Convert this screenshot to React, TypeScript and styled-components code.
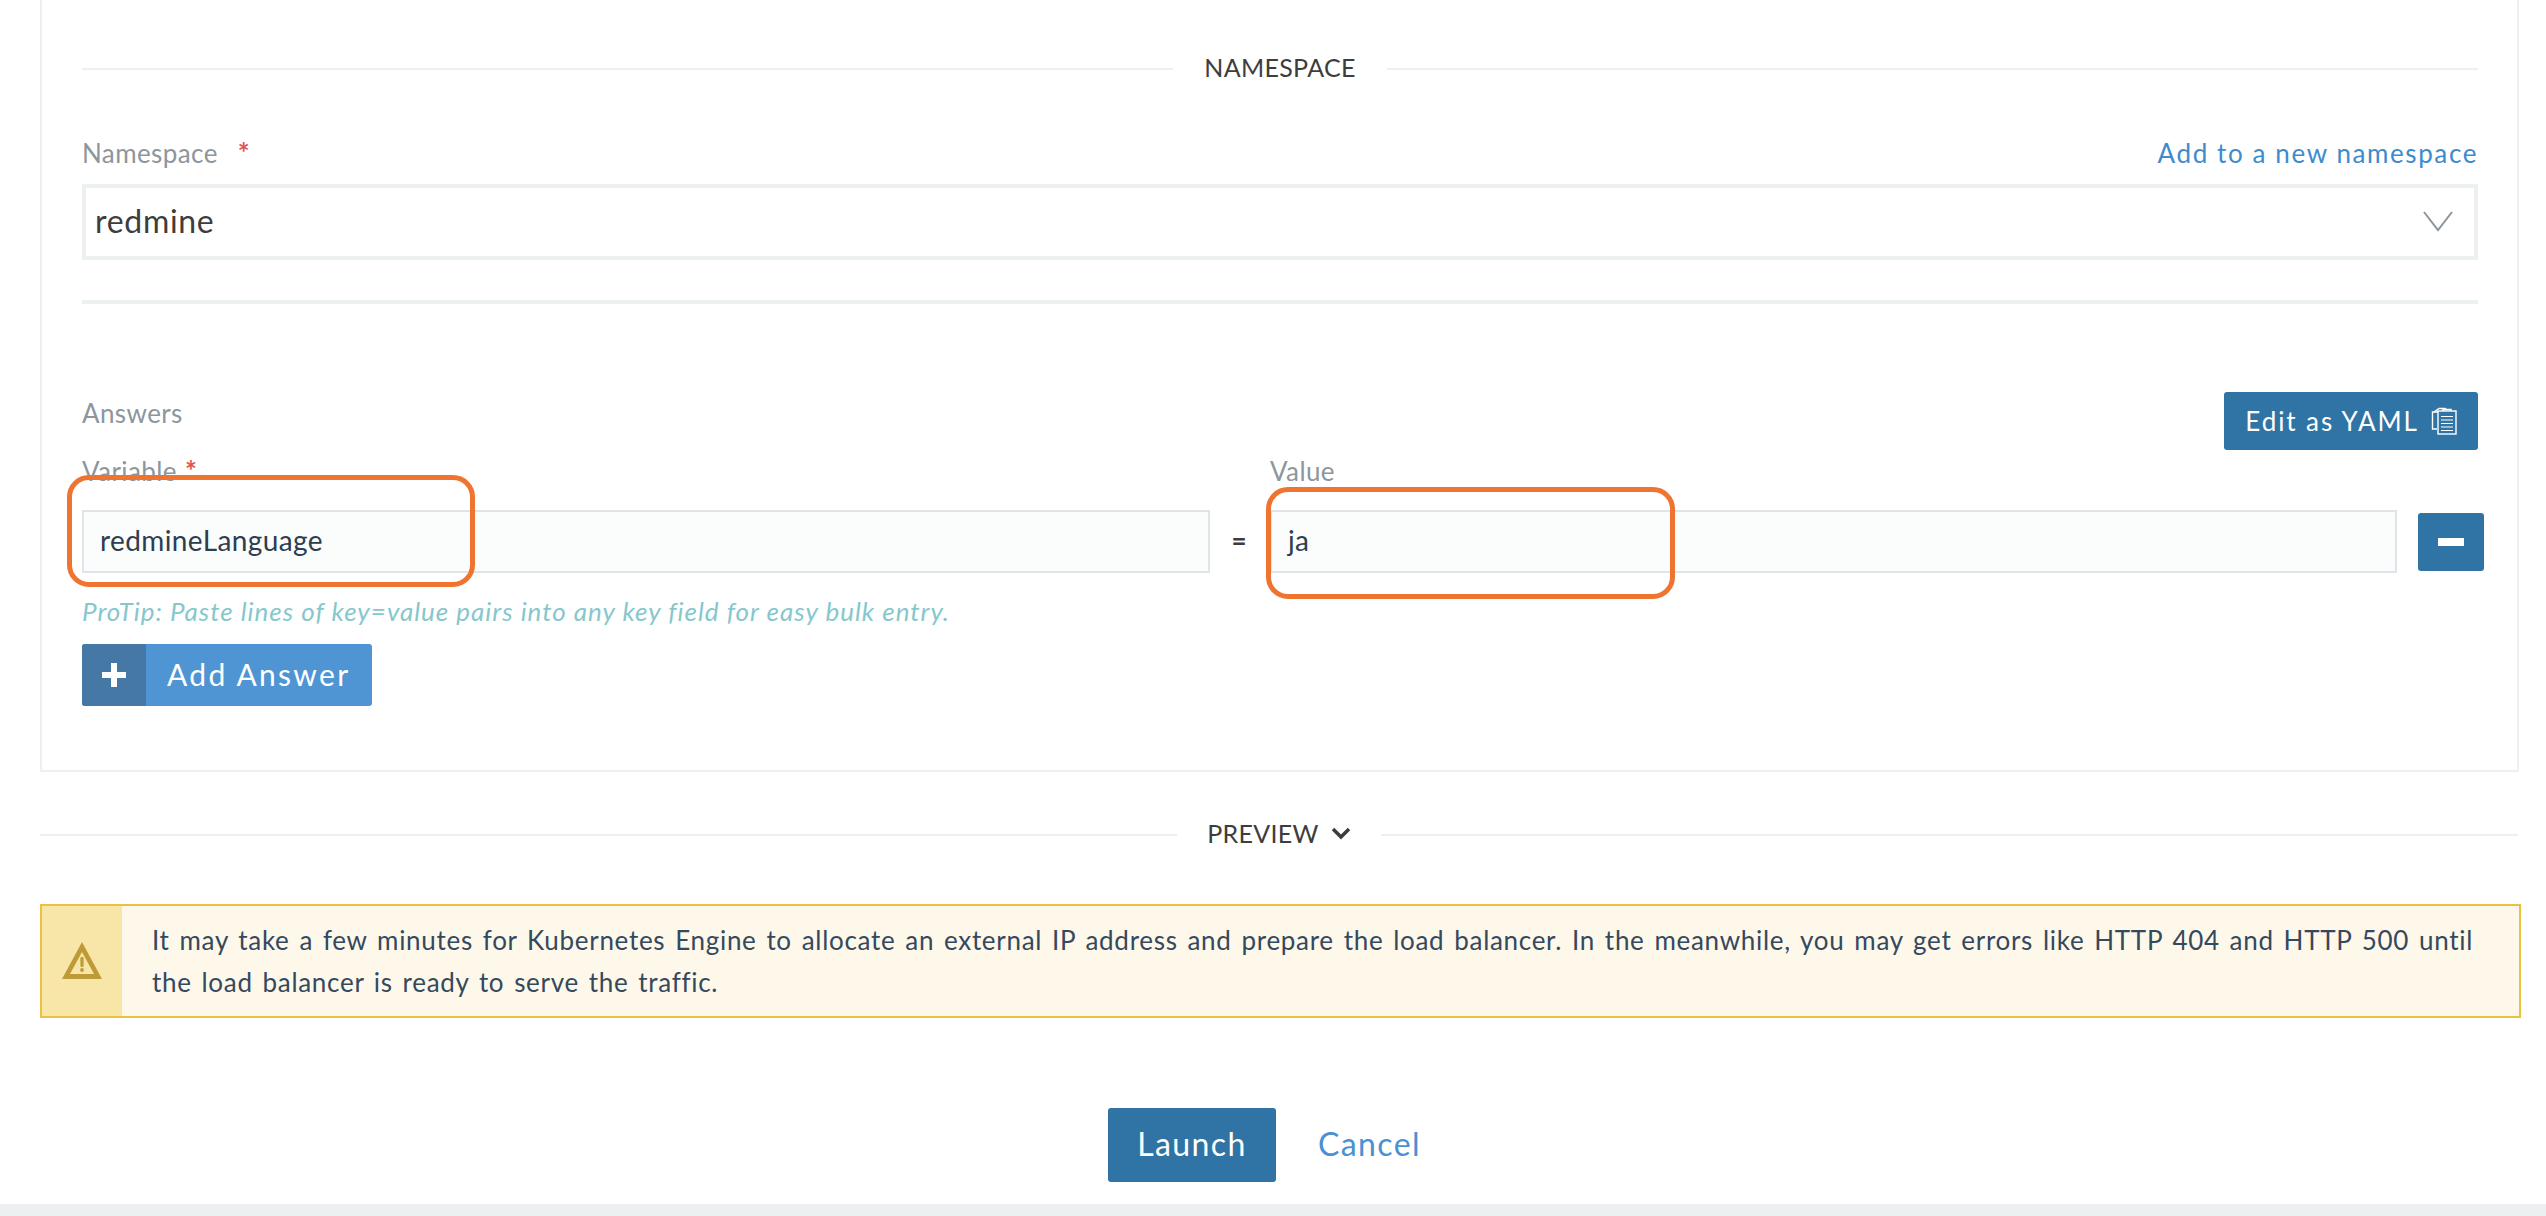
import React from 'react';
import styled, { createGlobalStyle } from 'styled-components';

const GlobalStyle = createGlobalStyle`
	html, body {
		margin: 0;
		padding: 0;
		background: #fff;
	}
	body {
		font-family: Lato, "Noto Sans", sans-serif;
		font-size: 26px;
		color: #3d3d3d;
	}
`;

const Page = styled.div`
	width: 2546px;
	height: 1216px;
	overflow: hidden;
	display: flex;
	flex-direction: column;
	box-sizing: border-box;
`;

const Main = styled.div`
	flex: 1;
	padding-left: 40px;
	width: 2481px;
`;

const Panel = styled.section`
	width: 2479px;
	box-sizing: border-box;
	padding: 53px 39px 64px 40px;
	border: 2px solid #edf0f1;
	border-top: none;
`;

const DividerRow = styled.div<{ $gap: number }>`
	display: flex;
	align-items: center;
	gap: ${(p) => p.$gap}px;
	height: 30px;
	line-height: 30px;
	letter-spacing: 0.3px;
	font-size: 25px;
	text-transform: uppercase;
	color: #3d3d3d;

	&::before,
	&::after {
		content: '';
		flex: 1;
		height: 2px;
		margin-top: 2px;
		background: #edf0f1;
	}
`;

const DividerLabel = styled.span`
	display: inline-flex;
	align-items: center;
	gap: 12px;
	margin-bottom: 2px;
`;

const FieldHead = styled.div`
	display: flex;
	justify-content: space-between;
	margin-top: 55px;
	height: 30px;
	line-height: 30px;
`;

const Label = styled.label`
	font-size: 26px;
	line-height: 30px;
	letter-spacing: 0.4px;
	color: #8d969d;
`;

const Required = styled.span<{ $gap: number }>`
	margin-left: ${(p) => p.$gap}px;
	font-size: 28px;
	font-weight: 700;
	line-height: 0;
	color: #e25555;
`;

const TextLink = styled.a`
	color: #3d8bcd;
	font-size: 26px;
	letter-spacing: 1.6px;
`;

const Select = styled.div`
	display: flex;
	align-items: center;
	justify-content: space-between;
	box-sizing: border-box;
	height: 76px;
	margin-top: 16px;
	padding: 0 20px 4px 9px;
	border: 4px solid #edf0f1;
	font-size: 32px;
	letter-spacing: 0.7px;
	color: #3d3d3d;
`;

const Rule = styled.hr`
	height: 4px;
	margin: 40px 0 0;
	border: none;
	background: #edf0f1;
`;

const AnswersHead = styled.div`
	display: flex;
	justify-content: space-between;
	align-items: flex-start;
	margin-top: 88px;
`;

const AnswersLabel = styled(Label)`
	padding-top: 6px;
`;

const Button = styled.button`
	display: inline-flex;
	align-items: center;
	justify-content: center;
	border: none;
	border-radius: 3px;
	background: #3073a5;
	color: #fff;
	font-family: inherit;
`;

const YamlButton = styled(Button)`
	gap: 12px;
	width: 254px;
	height: 58px;
	font-size: 26px;
	letter-spacing: 1.9px;
`;

const Answer = styled.div`
	display: flex;
	align-items: flex-end;
	margin-top: 6px;
	width: 2402px;
`;

const Field = styled.div<{ $width: number }>`
	position: relative;
	width: ${(p) => p.$width}px;
	flex: none;
`;

const FieldLabel = styled(Label)`
	display: block;
	margin-bottom: 24px;
`;

const Input = styled.div`
	box-sizing: border-box;
	height: 63px;
	padding-left: 16px;
	border: 2px solid #dfe4e8;
	background: #fbfcfc;
	font-size: 28px;
	letter-spacing: 0.4px;
	line-height: 56px;
	color: #2d3e50;
`;

const Equals = styled.div`
	flex: none;
	width: 58px;
	height: 63px;
	padding-right: 2px;
	line-height: 60px;
	text-align: center;
	font-size: 26px;
	font-weight: 700;
	color: #3d3d3d;
`;

const Callout = styled.div<{ $left: number; $top: number; $width: number }>`
	position: absolute;
	left: ${(p) => p.$left}px;
	top: ${(p) => p.$top}px;
	width: ${(p) => p.$width}px;
	height: 112px;
	box-sizing: border-box;
	border: 5px solid #ee7430;
	border-radius: 22px;
`;

const MinusButton = styled(Button)`
	flex: none;
	width: 66px;
	height: 58px;
	margin: 0 0 2px 21px;
`;

const ProTip = styled.div`
	margin-top: 23px;
	line-height: 30px;
	font-size: 26px;
	font-style: italic;
	letter-spacing: 1px;
	color: #86c7cc;
`;

const AddButton = styled.button`
	display: flex;
	align-items: stretch;
	width: 290px;
	height: 62px;
	margin-top: 18px;
	padding: 0;
	border: none;
	border-radius: 3px;
	overflow: hidden;
	background: #4f95d4;
	color: #fff;
	font-family: inherit;
	font-size: 30px;
	letter-spacing: 2.3px;
`;

const AddIcon = styled.span`
	display: flex;
	align-items: center;
	justify-content: center;
	width: 64px;
	background: #4578a4;
`;

const AddText = styled.span`
	flex: 1;
	line-height: 60px;
	text-align: left;
	padding-left: 21px;
`;

const PreviewRow = styled(DividerRow)`
	margin-top: 47px;
	width: 2478px;
`;

const Banner = styled.div`
	display: flex;
	box-sizing: border-box;
	width: 2481px;
	height: 114px;
	margin-top: 55px;
	border: 2px solid #eac143;
	background: #fef8ea;
`;

const BannerIcon = styled.div`
	display: flex;
	align-items: center;
	justify-content: center;
	flex: none;
	width: 80px;
	background: #f8e6a8;
`;

const BannerText = styled.p`
	flex: 1;
	margin: 0;
	padding: 13px 46px 0 30px;
	font-size: 26px;
	line-height: 42px;
	letter-spacing: 0.7px;
	word-spacing: 2.5px;
	text-align: justify;
	color: #34495e;
`;

const Actions = styled.div`
	display: flex;
	align-items: center;
	justify-content: center;
	gap: 42px;
	margin-top: 90px;
	padding-right: 32px;
`;

const LaunchButton = styled(Button)`
	width: 168px;
	height: 74px;
	padding: 0 0 3px;
	font-size: 32px;
	letter-spacing: 1.4px;
`;

const CancelLink = styled.a`
	margin-bottom: 3px;
	color: #4a90d2;
	font-size: 32px;
	letter-spacing: 1.4px;
`;

const Footer = styled.footer`
	flex: none;
	height: 12px;
	background: #edf0f1;
`;

const Chevron: React.FC<{ size: number; color: string; stroke: number }> = ({ size, color, stroke }) => (
	<svg width={size} height={size} viewBox="0 0 32 32" fill="none">
		<path d="M2 8 L16 26 L30 8" stroke={color} strokeWidth={stroke} />
	</svg>
);

const ClipboardIcon = () => (
	<svg width="26" height="28" viewBox="0 0 26 28" fill="none" stroke="#fff" strokeWidth="1.4">
		<path d="M7 5 H1.5 V22 H6" />
		<path d="M3 5 L8 1.5 H14 L16 3" />
		<rect x="7" y="4" width="18" height="23" />
		<path d="M12 4 V2.5 H20 V4" />
		<path d="M10 9.5 H22 M10 13 H22 M10 16.500 H22 M10 20 H22 M10 23.500 H22" strokeWidth="1.1" />
	</svg>
);

const WarningIcon = () => (
	<svg width="40" height="38" viewBox="0 0 40 38">
		<path fillRule="evenodd" fill="#bf9b38" d="M20 0 L40 37 H0 Z M20 10 L8 32 H32 Z" />
		<rect x="18.400" y="15" width="3.200" height="10" rx="1.200" fill="#bf9b38" />
		<circle cx="20" cy="28" r="1.900" fill="#bf9b38" />
	</svg>
);

const App: React.FC = () => (
	<>
		<GlobalStyle />
		<Page>
			<Main>
				<Panel>
					<DividerRow $gap={31}>
						<DividerLabel>Namespace</DividerLabel>
					</DividerRow>
					<FieldHead>
						<Label>
							Namespace<Required $gap={20}>*</Required>
						</Label>
						<TextLink>Add to a new namespace</TextLink>
					</FieldHead>
					<Select>
						redmine
						<Chevron size={32} color="#8d969d" stroke={2} />
					</Select>
					<Rule />
					<AnswersHead>
						<AnswersLabel>Answers</AnswersLabel>
						<YamlButton>
							Edit as YAML
							<ClipboardIcon />
						</YamlButton>
					</AnswersHead>
					<Answer>
						<Field $width={1128}>
							<FieldLabel>
								Variable<Required $gap={8}>*</Required>
							</FieldLabel>
							<Input>redmineLanguage</Input>
							<Callout $left={-15} $top={19} $width={408} />
						</Field>
						<Equals>=</Equals>
						<Field $width={1127}>
							<FieldLabel>Value</FieldLabel>
							<Input>ja</Input>
							<Callout $left={-4} $top={31} $width={409} />
						</Field>
						<MinusButton>
							<svg width="26" height="8" viewBox="0 0 26 8">
								<rect width="26" height="8" fill="#fff" />
							</svg>
						</MinusButton>
					</Answer>
					<ProTip>ProTip: Paste lines of key=value pairs into any key field for easy bulk entry.</ProTip>
					<AddButton>
						<AddIcon>
							<svg width="24" height="24" viewBox="0 0 24 24">
								<path fill="#fff" d="M9 0 H15 V9 H24 V15 H15 V24 H9 V15 H0 V9 H9 Z" />
							</svg>
						</AddIcon>
						<AddText>Add Answer</AddText>
					</AddButton>
				</Panel>
				<PreviewRow $gap={30}>
					<DividerLabel>
						Preview
						<svg width="20" height="14" viewBox="0 0 20 14" fill="none">
							<path d="M2 3 L10 11 L18 3" stroke="#3d3d3d" strokeWidth="3.500" />
						</svg>
					</DividerLabel>
				</PreviewRow>
				<Banner>
					<BannerIcon>
						<WarningIcon />
					</BannerIcon>
					<BannerText>
						It may take a few minutes for Kubernetes Engine to allocate an external IP address and prepare the load
						balancer. In the meanwhile, you may get errors like HTTP 404 and HTTP 500 until the load balancer is ready
						to serve the traffic.
					</BannerText>
				</Banner>
				<Actions>
					<LaunchButton>Launch</LaunchButton>
					<CancelLink>Cancel</CancelLink>
				</Actions>
			</Main>
			<Footer />
		</Page>
	</>
);

export default App;
